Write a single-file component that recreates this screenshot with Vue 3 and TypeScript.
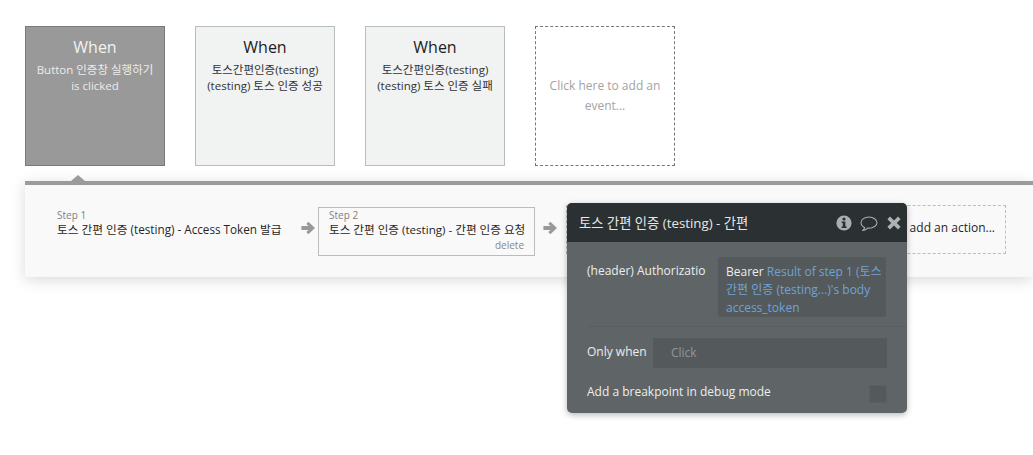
<script setup lang="ts">
interface EventCard { text: string[]; active?: boolean }
const events: EventCard[] = [
  { text: ['Button 인증창 실행하기', 'is clicked'], active: true },
  { text: ['토스간편인증(testing)', '(testing) 토스 인증 성공'] },
  { text: ['토스간편인증(testing)', '(testing) 토스 인증 실패'] },
]
</script>

<template>
  <div class="page">
    <div class="events">
      <div v-for="(e, i) in events" :key="i" class="card" :class="{ active: e.active }">
        <div class="when">When</div>
        <div class="desc"><div v-for="t in e.text" :key="t">{{ t }}</div></div>
      </div>
      <div class="card add">Click here to add an event...</div>
    </div>
    <div class="editor">
      <div class="notch"></div>
      <div class="steps">
        <div class="step first">
          <div class="label">Step 1</div>
          <div class="title">토스 간편 인증 (testing) - Access Token 발급</div>
        </div>
        <svg class="arrow" viewBox="0 0 14 14"><path d="M7.400 .8 L14 7 L7.400 13.200 L5.200 11 L7.600 9 H0.4 V5 H7.600 L5.200 3 Z" fill="#999"/></svg>
        <div class="step second">
          <div class="label">Step 2</div>
          <div class="title">토스 간편 인증 (testing) - 간편 인증 요청</div>
          <div class="delete">delete</div>
        </div>
        <svg class="arrow" viewBox="0 0 14 14"><path d="M7.400 .8 L14 7 L7.400 13.200 L5.200 11 L7.600 9 H0.4 V5 H7.600 L5.200 3 Z" fill="#999"/></svg>
        <div class="add-action">Click here to add an action...</div>
      </div>
    </div>
    <div class="palette">
      <div class="head">
        <div class="head-title">토스 간편 인증 (testing) - 간편</div>
        <svg class="ico info" viewBox="0 0 16 16"><circle cx="8" cy="8" r="7.600" fill="#a9aeaf"/><circle cx="8" cy="4" r="1.600" fill="#2b3032"/><path d="M5.600 6.400H9.400V11.400H10.600V13H5.600V11.400H6.800V8H5.600Z" fill="#2b3032"/></svg>
        <svg class="ico bubble" viewBox="0 0 18 16"><path d="M9 1C4.600 1 1 3.500 1 6.700c0 2 1.400 3.700 3.600 4.700-.2 1.200-.8 2.200-1.600 3 1.900-.2 3.600-1.200 4.800-2.300.4 0 .8.100 1.200.1 4.400 0 8-2.500 8-5.500S13.400 1 9 1Z" fill="none" stroke="#a9aeaf" stroke-width="1.100"/></svg>
        <svg class="ico close" viewBox="0 0 14 14"><path d="M3 .6 7 4.400 11 .6 13.600 3.200 9.800 7l3.800 3.800L11 13.400 7 9.600 3 13.400.4 10.800 4.200 7 .4 3.200Z" fill="#aeb2b3"/></svg>
      </div>
      <div class="body">
        <div class="row auth">
          <div class="auth-label">(header) Authorizatio</div>
          <div class="auth-value">Bearer <span class="dyn">Result of step 1 (토스 간편 인증 (testing...)'s body access_token</span></div>
        </div>
        <div class="row only">
          <div class="only-label">Only when</div>
          <div class="only-input">Click</div>
        </div>
        <div class="row bp">
          <div class="bp-label">Add a breakpoint in debug mode</div>
          <div class="check"></div>
        </div>
      </div>
    </div>
  </div>
</template>

<style>
html, body { margin: 0; background: #fff; overflow: hidden; }
</style>

<style scoped>
.page {
  position: relative;
  width: 1033px;
  height: 455px;
  overflow: hidden;
  padding: 26px 0 0 25px;
  box-sizing: border-box;
  font-family: "Open Sans", "Noto Sans CJK KR", sans-serif;
  font-size: 12px;
  color: #2a2a2a;
}
.events { display: flex; gap: 30px; }
.card {
  width: 140px;
  height: 140px;
  box-sizing: border-box;
  border: 1px solid #b9bdbe;
  background: #f1f2f2;
  text-align: center;
  padding-top: 8px;
  flex: none;
}
.when { font-size: 16px; line-height: 24px; color: #1d1d1d; }
.desc { font-size: 11.5px; line-height: 16px; margin-top: 3px; color: #333; }
.card.active { background: #999; border-color: #7a7a7a; }
.card.active .when { color: #f2f2f2; }
.card.active .desc { color: #ececec; }
.card.add {
  background: #fff;
  border: 1px dashed #777;
  color: #a3a3a3;
  padding: 49px 10px 0;
  line-height: 20px;
}
.editor {
  position: relative;
  margin-top: 15px;
  height: 96px;
  box-sizing: border-box;
  border-top: 4px solid #9b9b9b;
  background: #f9f9f9;
  box-shadow: 0 3px 14px rgba(0, 0, 0, 0.15);
}
.notch {
  position: absolute;
  left: 46px;
  top: -10px;
  border-left: 7px solid transparent;
  border-right: 7px solid transparent;
  border-bottom: 6px solid #9b9b9b;
}
.steps {
  display: flex;
  align-items: flex-start;
  padding: 22px 0 0 32px;
}
.step { box-sizing: border-box; white-space: nowrap; flex: none; }
.label { font-size: 10px; line-height: 13px; color: #808080; }
.title { font-size: 11.6px; line-height: 15px; color: #262626; }
.step.first { width: 230px; padding-top: 2px; }
.step.first .title { font-size: 11.7px; }
.step.second {
  width: 217px;
  height: 49px;
  border: 1px solid #b9bdbe;
  padding: 1px 10px 0;
}
.delete { font-size: 10px; line-height: 14px; text-align: right; color: #888; margin-top: 1px; }
.arrow { width: 14px; height: 14px; flex: none; margin-top: 14px; margin-left: 14px; margin-right: 3px; }
.step.second + .arrow { margin-left: 8px; margin-right: 0; }
.add-action {
  height: 49px;
  width: 440px;
  flex: none;
  box-sizing: border-box;
  border: 1px dashed #b9bdbe;
  margin: -2px 0 0 9px;
  line-height: 43px;
  text-align: right;
  padding-right: 10px;
  color: #262626;
}
.palette {
  position: absolute;
  left: 567px;
  top: 203px;
  width: 340px;
  height: 210px;
  border-radius: 5px;
  overflow: hidden;
  background: #5f6567;
  box-shadow: 0 2px 6px rgba(0, 0, 0, 0.28);
  color: #eceded;
}
.head {
  height: 39px;
  background: #2b3032;
  display: flex;
  align-items: center;
  padding: 0 5px 0 12px;
  box-sizing: border-box;
}
.head-title { width: 172px; margin-right: 84px; flex: none; font-size: 13.3px; color: #e6e7e7; white-space: nowrap; margin-top: -1px; }
.ico { flex: none; display: block; }
.info { width: 16px; height: 16px; margin-left: 1px; }
.bubble { width: 18px; height: 16px; margin-left: 8px; margin-top: 2px; }
.close { width: 14px; height: 14px; margin-left: 9px; }
.body { padding: 15px 20px 0; }
.row { display: flex; }
.auth { align-items: flex-start; height: 70px; box-sizing: border-box; border-bottom: 1px solid #595f61; margin-right: -20px; }
.auth-label { width: 131px; flex: none; line-height: 18px; padding-top: 5px; white-space: nowrap; }
.auth-value {
  width: 168px;
  height: 60px;
  flex: none;
  box-sizing: border-box;
  padding: 6px 4px 0 8px;
  background: #54595b;
  border-radius: 2px;
  line-height: 18px;
}
.dyn { color: #6fa3d8; }
.only { align-items: center; margin-top: 11px; height: 30px; }
.only-label { width: 66px; flex: none; line-height: 28px; height: 30px; }
.only-input {
  width: 234px;
  height: 30px;
  flex: none;
  background: #54595b;
  line-height: 29px;
  padding-left: 18px;
  box-sizing: border-box;
  color: #92979a;
}
.bp { align-items: center; justify-content: space-between; margin-top: 17px; height: 18px; }
.bp-label { line-height: 14px; height: 18px; }
.check { width: 18px; height: 18px; background: #54595b; border: 1px solid #5a5f61; box-sizing: border-box; }
</style>
